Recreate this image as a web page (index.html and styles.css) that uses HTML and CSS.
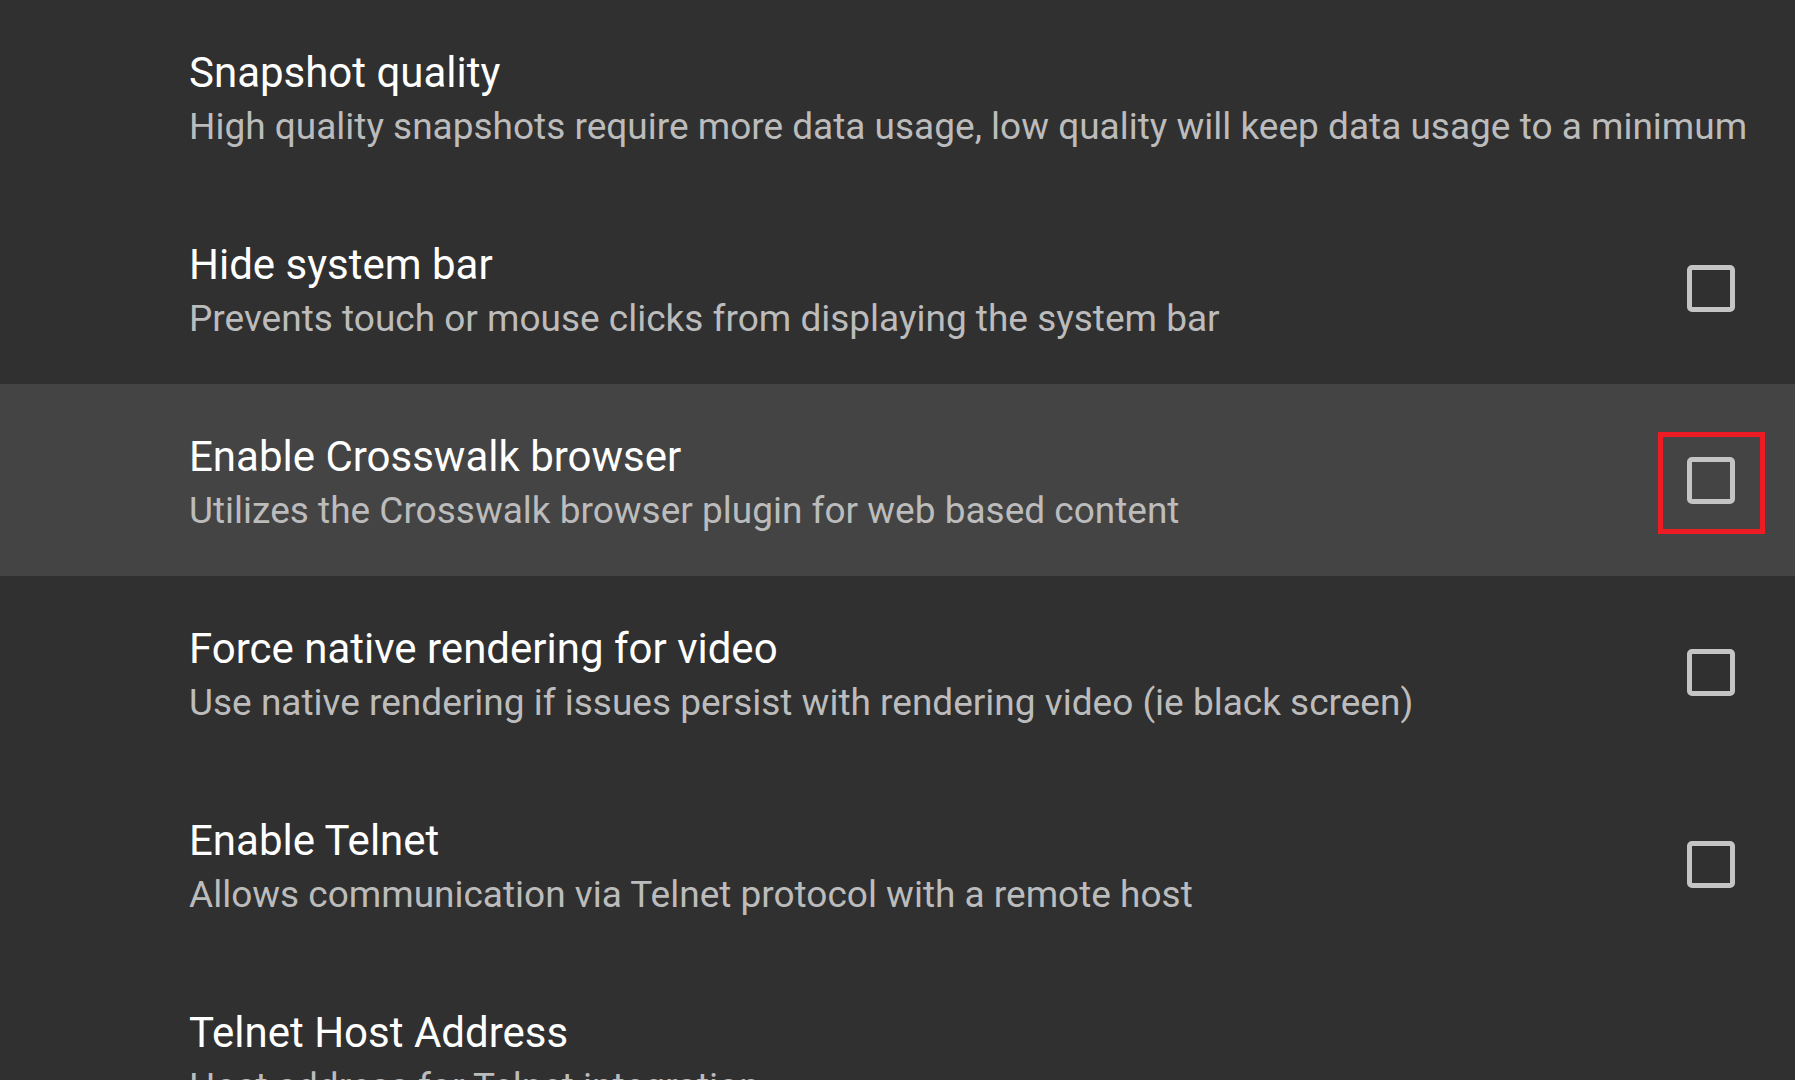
FILE: index.html
```html
<!DOCTYPE html>
<html>
<head>
<meta charset="utf-8">
<link rel="stylesheet" href="styles.css">
</head>
<body>
<div class="list">
  <div class="row">
    <div class="text">
      <div class="title">Snapshot quality</div>
      <div class="summary">High quality snapshots require more data usage, low quality will keep data usage to a minimum</div>
    </div>
  </div>
  <div class="row">
    <div class="text">
      <div class="title">Hide system bar</div>
      <div class="summary">Prevents touch or mouse clicks from displaying the system bar</div>
    </div>
    <div class="check"></div>
  </div>
  <div class="row active">
    <div class="text">
      <div class="title">Enable Crosswalk browser</div>
      <div class="summary">Utilizes the Crosswalk browser plugin for web based content</div>
    </div>
    <div class="check"><div class="focus"></div></div>
  </div>
  <div class="row">
    <div class="text">
      <div class="title">Force native rendering for video</div>
      <div class="summary">Use native rendering if issues persist with rendering video (ie black screen)</div>
    </div>
    <div class="check"></div>
  </div>
  <div class="row">
    <div class="text">
      <div class="title">Enable Telnet</div>
      <div class="summary">Allows communication via Telnet protocol with a remote host</div>
    </div>
    <div class="check"></div>
  </div>
  <div class="row">
    <div class="text">
      <div class="title">Telnet Host Address</div>
      <div class="summary">Host address for Telnet integration</div>
    </div>
  </div>
</div>
</body>
</html>
```

FILE: styles.css
```css
html, body {
  margin: 0;
  padding: 0;
  background: #303030;
  overflow: hidden;
}
body {
  width: 1795px;
  height: 1080px;
  font-family: Roboto, "Noto Sans", sans-serif;
}
.list {
  display: flex;
  flex-direction: column;
}
.row {
  height: 192px;
  flex: none;
  display: flex;
  align-items: center;
  padding: 0 60px 0 189px;
  box-sizing: border-box;
}
.row.active {
  background: #444444;
}
.text {
  flex: 1;
  display: flex;
  flex-direction: column;
  white-space: nowrap;
  padding-top: 4px;
}
.title {
  color: #ffffff;
  font-size: 42px;
  line-height: 57px;
}
.summary {
  color: #bcbcbc;
  font-size: 37px;
  line-height: 52px;
}
.check {
  position: relative;
  width: 48px;
  height: 47px;
  box-sizing: border-box;
  border: 5px solid #c4c4c4;
  border-radius: 5px;
  flex: none;
}
.focus {
  position: absolute;
  left: -34px;
  top: -30px;
  width: 107px;
  height: 102px;
  box-sizing: border-box;
  border: 5px solid #ed1c24;
}
```
